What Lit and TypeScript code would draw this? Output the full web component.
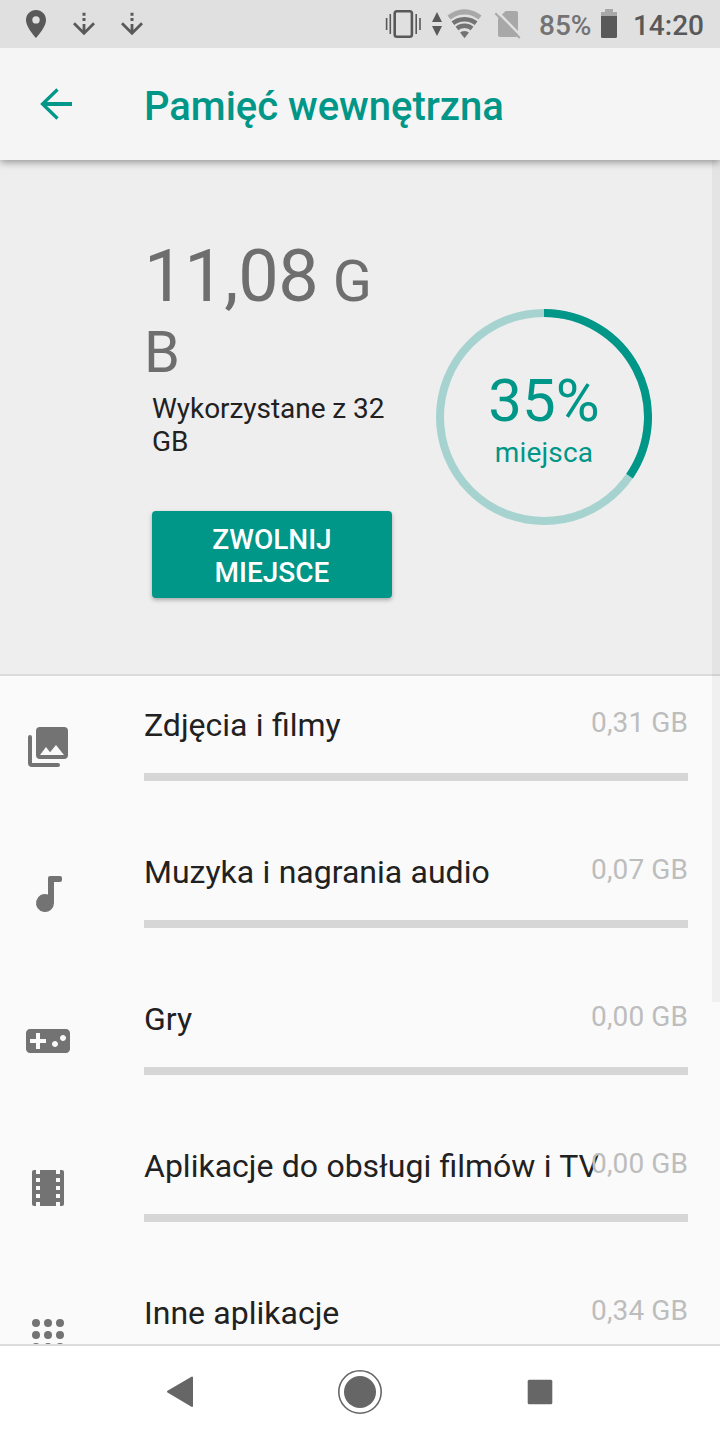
import { LitElement, html, css, svg } from "lit";
import { customElement, property } from "lit/decorators.js";

const icons = {
  photos: svg`
    <path fill-rule="evenodd" d="M8 2h12a2 2 0 0 1 2 2v12a2 2 0 0 1-2 2H8a2 2 0 0 1-2-2V4a2 2 0 0 1 2-2zM8 16h12l-4-5-3 3.6L11 12z"/>
    <path d="M2 7a1 1 0 0 1 2 0v13h13a1 1 0 0 1 0 2H4a2 2 0 0 1-2-2z"/>`,
  music: svg`<path d="M13 3h5a1 1 0 0 1 1 1v1a1 1 0 0 1-1 1h-3v10.5a4.5 4.5 0 1 1-3-4.24V4a1 1 0 0 1 1-1z"/>`,
  games: svg`<path d="M21 6H3c-1.1 0-2 .9-2 2v8c0 1.1.9 2 2 2h18c1.1 0 2-.9 2-2V8c0-1.1-.9-2-2-2zm-10 7H8v3H6v-3H3v-2h3V8h2v3h3v2zm4.5 2c-.83 0-1.5-.67-1.5-1.5s.67-1.5 1.5-1.5 1.5.67 1.5 1.5-.67 1.5-1.5 1.5zm4-3c-.83 0-1.5-.67-1.5-1.5S18.67 9 19.5 9s1.5.67 1.5 1.5-.67 1.5-1.5 1.5z"/>`,
  movies: svg`<path d="M18 3v2h-2V3H8v2H6V3H5a1 1 0 0 0-1 1v16a1 1 0 0 0 1 1h1v-2h2v2h8v-2h2v2h1a1 1 0 0 0 1-1V4a1 1 0 0 0-1-1h-1zM8 17H6v-2h2v2zm0-4H6v-2h2v2zm0-4H6V7h2v2zm10 8h-2v-2h2v2zm0-4h-2v-2h2v2zm0-4h-2V7h2v2z"/>`,
  apps: svg`${[6, 12, 18].map((y) => [6, 12, 18].map((x) => svg`<circle cx=${x} cy=${y} r="2"/>`))}`,
};

type IconName = keyof typeof icons;

@customElement("status-bar")
class StatusBar extends LitElement {
  static styles = css`
    :host {
      display: flex;
      height: 48px;
      flex: none;
      background: #e0e0e0;
      color: #595959;
      font-weight: 500;
      font-size: 28px;
      line-height: 48px;
    }
    svg { display: block; flex: none; }
    .fill { flex: 1; }
    .level, .clock { box-sizing: border-box; height: 48px; padding-top: 2px; }
    .level { color: #737373; width: 62px; }
    .clock { width: 103px; text-align: right; padding-right: 16px; }
  `;
  render() {
    return html`
      <svg width="160" height="48" fill="#595959">
        <path fill-rule="evenodd" d="M36 10c-5.6 0-10 4.4-10 10 0 7.400 10 18 10 18s10-10.600 10-18c0-5.600-4.400-10-10-10zm0 13.600a3.700 3.700 0 1 1 0-7.400 3.700 3.700 0 0 1 0 7.400z"/>
        ${[84, 132].map(
          (x) => svg`<g transform="translate(${x} 0)">
            <path d="M-1.500 12.700h3v3h-3zM-1.500 18h3v3h-3z"/>
            <path d="M0 24v8M-10 23.300L0 33.200 10 23.300" fill="none" stroke="#595959" stroke-width="2.800"/>
          </g>`
        )}
      </svg>
      <span class="fill"></span>
      <svg width="155" height="48" viewBox="384 0 155 48">
        <g fill="none" stroke="#595959">
          <rect x="394.700" y="11.200" width="17.200" height="25.600" rx="2.200" stroke-width="2.600"/>
          <path stroke-width="1.600" d="M386.600 18v12M390.300 14v20M416.200 14v20M420 18v12"/>
        </g>
        <path fill="#595959" d="M437 12l5 10h-10zM437 36l5-10h-10z"/>
        <path fill="#a8a8a8" d="M447.500 15.600a26 26 0 0 1 34 0l-3 4a21.500 21.500 0 0 0-28 0z"/>
        <clipPath id="fan"><path d="M464.500 38.200L445 13V8h39v5z"/></clipPath>
        <g clip-path="url(#fan)" fill="none" stroke="#737373">
          <circle cx="464.500" cy="38" r="18.800" stroke-width="4.600"/>
          <circle cx="464.500" cy="38" r="12.300" stroke-width="4.600"/>
          <circle cx="464.500" cy="38" r="3.600" stroke-width="7"/>
        </g>
        <path fill="#a8a8a8" d="M505.500 11H516a2 2 0 0 1 2 2v22a2 2 0 0 1-2 2H500a2 2 0 0 1-2-2V18.500z"/>
        <path stroke="#e0e0e0" stroke-width="2.400" d="M497 11.300l25 25.500"/>
        <path stroke="#a8a8a8" stroke-width="2" d="M495.300 13.300l24.500 24.700"/>
      </svg>
      <span class="level">85%</span>
      <svg width="16" height="48" viewBox="601 0 16 48">
        <path fill="#a8a8a8" d="M605 9h8v3h4v5h-16v-5h4z"/>
        <path fill="#595959" d="M601 16h16v20.500q0 1.500-1.500 1.500h-13q-1.500 0-1.500-1.500z"/>
      </svg>
      <span class="clock">14:20</span>
    `;
  }
}

@customElement("usage-ring")
class UsageRing extends LitElement {
  @property({ type: Number }) ratio = 0;

  static styles = css`
    :host { display: grid; width: 216px; height: 216px; color: #009688; text-align: center; }
    svg, .text { grid-area: 1 / 1; }
    svg { display: block; fill: none; stroke-width: 8px; }
    .track { stroke: #a6d3cf; }
    .arc { stroke: #009688; }
    .text { padding-top: 57px; }
    .pct { font-size: 60px; line-height: 70px; }
    .unit { font-size: 28px; line-height: 33px; letter-spacing: 0.15px; }
  `;
  render() {
    const angle = this.ratio * 2 * Math.PI;
    const x = 108 + 104 * Math.sin(angle);
    const y = 108 - 104 * Math.cos(angle);
    return html`
      <svg width="216" height="216">
        <circle class="track" cx="108" cy="108" r="104"/>
        <path class="arc" d="M108 4A104 104 0 0 1 ${x} ${y}"/>
      </svg>
      <div class="text">
        <div class="pct">35%</div>
        <div class="unit">miejsca</div>
      </div>
    `;
  }
}

@customElement("storage-row")
class StorageRow extends LitElement {
  @property() icon: IconName = "photos";
  @property() label = "";
  @property() size = "";

  static styles = css`
    :host { display: flex; height: 147px; }
    .icon { width: 120px; padding: 47px 0 0 24px; flex: none; }
    svg { display: block; fill: #737373; }
    .body { width: 544px; }
    .head { display: grid; height: 97px; }
    .label, .size { grid-area: 1 / 1; white-space: nowrap; }
    .label { font-size: 32px; line-height: 38px; padding-top: 30px; color: #212121; word-spacing: 0.4px; }
    .size { font-size: 28px; line-height: 33px; padding-top: 30px; color: #bdbdbd; text-align: right; letter-spacing: 0.1px; }
    .bar { height: 8px; background: #d6d6d6; }
  `;
  render() {
    return html`
      <div class="icon"><svg width="48" height="48" viewBox="0 0 24 24">${icons[this.icon]}</svg></div>
      <div class="body">
        <div class="head">
          <div class="label">${this.label}</div>
          <div class="size">${this.size}</div>
        </div>
        <div class="bar"></div>
      </div>
    `;
  }
}

@customElement("app-root")
class AppRoot extends LitElement {
  static styles = css`
    :host {
      display: flex;
      flex-direction: column;
      position: relative;
      width: 720px;
      height: 1440px;
      overflow: hidden;
      background: #fafafa;
      font-family: Roboto, sans-serif;
    }
    .bar {
      display: flex;
      flex: none;
      align-items: center;
      height: 112px;
      background: #f5f5f5;
      color: #009688;
      position: relative;
      z-index: 2;
      box-shadow: 0 2px 8px rgba(0, 0, 0, 0.4);
      clip-path: inset(0 0 -16px 0);
    }
    .back { width: 112px; padding-left: 32px; flex: none; }
    .back svg { display: block; }
    .title { font-size: 40px; line-height: 48px; font-weight: 500; padding-top: 6px; white-space: nowrap; letter-spacing: -0.02px; }
    .summary {
      display: flex;
      flex: none;
      height: 514px;
      background: #eeeeee;
      border-bottom: 2px solid #dadada;
    }
    .used { width: 248px; padding: 75px 44px 0 144px; }
    .line { height: 71px; color: #6e6e6e; font-size: 57.6px; line-height: 71px; white-space: nowrap; }
    .line.first { height: 82px; line-height: 84px; }
    .num { font-size: 72px; letter-spacing: -0.3px; }
    .total { padding: 4px 0 0 8px; font-size: 28px; line-height: 33px; color: #212121; letter-spacing: -0.05px; }
    .free {
      display: block;
      width: 240px;
      margin: 53px 0 0 8px;
      padding: 12px 40px 9px;
      border: 0;
      border-radius: 4px;
      background: #009688;
      color: #fff;
      font: 500 28px/33px Roboto, sans-serif;
      box-shadow: 0 2px 4px rgba(0, 0, 0, 0.3);
    }
    .ring { padding-top: 149px; }
    .list { flex: 1; min-height: 0; overflow: hidden; }
    .nav {
      display: flex;
      flex: none;
      height: 94px;
      border-top: 2px solid #dcdcdc;
      background: #fff;
      justify-content: center;
    }
    .nav svg { display: block; }
    .thumb {
      position: absolute;
      z-index: 1;
      top: 160px;
      right: 0;
      width: 8px;
      height: 842px;
      background: rgba(0, 0, 0, 0.04);
    }
  `;

  private rows: { icon: IconName; label: string; size: string }[] = [
    { icon: "photos", label: "Zdjęcia i filmy", size: "0,31 GB" },
    { icon: "music", label: "Muzyka i nagrania audio", size: "0,07 GB" },
    { icon: "games", label: "Gry", size: "0,00 GB" },
    { icon: "movies", label: "Aplikacje do obsługi filmów i TV", size: "0,00 GB" },
    { icon: "apps", label: "Inne aplikacje", size: "0,34 GB" },
  ];

  render() {
    return html`
      <status-bar></status-bar>
      <div class="bar">
        <div class="back">
          <svg width="48" height="48" fill="none" stroke="#009688">
            <path stroke-width="4" d="M11 24h29"/>
            <path stroke-width="3.200" d="M25.500 9.500L10.500 24l15 14.500"/>
          </svg>
        </div>
        <div class="title">Pamięć wewnętrzna</div>
      </div>
      <div class="summary">
        <div class="used">
          <div class="line first"><span class="num">11,08</span> G</div>
          <div class="line">B</div>
          <div class="total">Wykorzystane z 32 GB</div>
          <button class="free">ZWOLNIJ MIEJSCE</button>
        </div>
        <div class="ring"><usage-ring .ratio=${11.08 / 32}></usage-ring></div>
      </div>
      <div class="list">
        ${this.rows.map(
          (r) => html`<storage-row .icon=${r.icon} .label=${r.label} .size=${r.size}></storage-row>`
        )}
      </div>
      <div class="nav">
        <svg width="720" height="94" viewBox="0 1346 720 94" fill="#666">
          <path stroke="#666" stroke-width="2" stroke-linejoin="round" d="M168 1391.700L192 1377.500V1406z"/>
          <circle cx="360" cy="1392" r="16"/>
          <circle cx="360" cy="1392" r="21.200" fill="none" stroke="#666" stroke-width="1.600"/>
          <rect x="527.700" y="1379.700" width="24.600" height="24.600" rx="1.500"/>
        </svg>
      </div>
      <div class="thumb"></div>
    `;
  }
}
